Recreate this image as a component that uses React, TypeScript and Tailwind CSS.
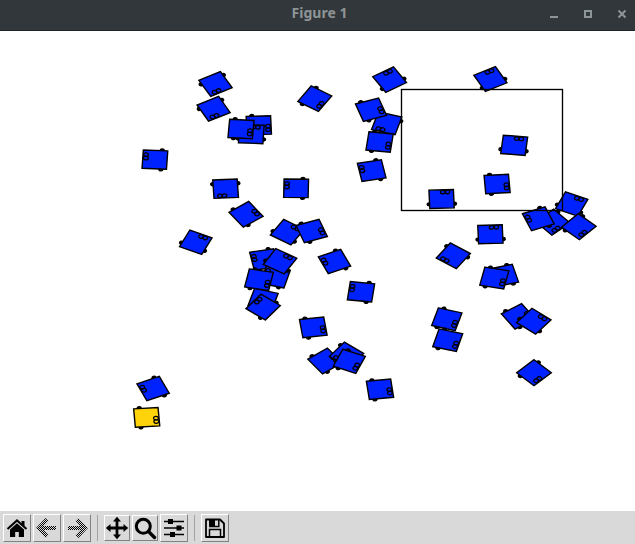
import type { ReactNode } from 'react';

type Robot = { x: number; y: number; angle: number; fill?: string };

const ASPECT = 1.33;

// Listed back to front: centre in pixels, heading in degrees (clockwise, 0 = right).
const robots: Robot[] = [
  { x: 215.5, y: 84, angle: 61 },
  { x: 213.6, y: 108.8, angle: 62 },
  { x: 258.8, y: 125.3, angle: -2 },
  { x: 251.3, y: 134, angle: -87 },
  { x: 241, y: 129, angle: 4 },
  { x: 154.9, y: 159.6, angle: 183 },
  { x: 314.8, y: 98.7, angle: 33 },
  { x: 389.6, y: 79.6, angle: -122 },
  { x: 386.7, y: 123.3, angle: 106 },
  { x: 371, y: 109.7, angle: -19 },
  { x: 379.6, y: 142, angle: 7 },
  { x: 371.7, y: 170.6, angle: 169 },
  { x: 225.6, y: 188.7, angle: 87 },
  { x: 296.1, y: 188.3, angle: 181 },
  { x: 246, y: 214.3, angle: -36 },
  { x: 195.8, y: 242.2, angle: -65 },
  { x: 287.3, y: 232.2, angle: -57 },
  { x: 311.7, y: 231, angle: -20 },
  { x: 264, y: 259.5, angle: 169 },
  { x: 275.3, y: 276.7, angle: 195 },
  { x: 280, y: 261.3, angle: -59 },
  { x: 263, y: 299.7, angle: 16 },
  { x: 259, y: 279.7, angle: 11 },
  { x: 263.1, y: 307.1, angle: 218 },
  { x: 334.5, y: 261.5, angle: 156 },
  { x: 361, y: 291.8, angle: 187 },
  { x: 313.3, y: 327.4, angle: -8 },
  { x: 325, y: 361, angle: -37 },
  { x: 346.5, y: 355, angle: 128 },
  { x: 349.3, y: 361.3, angle: 23 },
  { x: 380, y: 389.3, angle: -7 },
  { x: 153.1, y: 388.6, angle: 156 },
  { x: 490.4, y: 79, angle: -118 },
  { x: 514.2, y: 145.3, angle: -84 },
  { x: 497.1, y: 184, angle: -4 },
  { x: 441.6, y: 199, angle: -92 },
  { x: 490.4, y: 234.3, angle: -92 },
  { x: 453.3, y: 255.8, angle: 125 },
  { x: 503.6, y: 275.6, angle: 165 },
  { x: 494.3, y: 278, angle: 12 },
  { x: 552.8, y: 222.2, angle: 48 },
  { x: 571.7, y: 204, angle: -66 },
  { x: 578.8, y: 226.7, angle: 43 },
  { x: 538.3, y: 218.8, angle: 158 },
  { x: 446.8, y: 319.2, angle: 16 },
  { x: 447.7, y: 340.2, angle: 15 },
  { x: 518.3, y: 316.3, angle: -34 },
  { x: 533.8, y: 321.2, angle: -51 },
  { x: 534, y: 372.7, angle: 45 },
  { x: 146.7, y: 417.4, angle: -4, fill: '#ffd30a' },
];

function RobotShape({ x, y, angle, fill = '#0022ff' }: Robot) {
  return (
    <g transform={`translate(${x} ${y}) scale(${ASPECT} 1) rotate(${angle})`} stroke="#000" strokeWidth="1.4">
      <circle cx="-5" cy="-9.5" r="1.5" fill="#000" vectorEffect="non-scaling-stroke" />
      <circle cx="-5" cy="9.5" r="1.5" fill="#000" vectorEffect="non-scaling-stroke" />
      <rect x="-9.2" y="-9.2" width="18.4" height="18.4" fill={fill} vectorEffect="non-scaling-stroke" />
      <circle cx="6.9" cy="1.2" r="1.8" fill="none" strokeWidth="1.3" vectorEffect="non-scaling-stroke" />
      <circle cx="6.9" cy="4.6" r="1.8" fill="none" strokeWidth="1.3" vectorEffect="non-scaling-stroke" />
    </g>
  );
}

function ToolButton({ label, small, children }: { label: string; small?: boolean; children: ReactNode }) {
  return (
    <button
      aria-label={label}
      className={`flex shrink-0 items-center justify-center border border-t-white border-l-white border-r-[#828282] border-b-[#828282] bg-[#d9d9d9] ${small ? 'size-[26px]' : 'size-7'}`}
    >
      <svg width="24" height="24" viewBox="0 0 24 24" className="shrink-0">
        {children}
      </svg>
    </button>
  );
}

function Separator() {
  return <div className="h-[26px] w-px shrink-0 bg-[#a3a3a3]" />;
}

export default function App() {
  return (
    <div className="flex h-[544px] w-[635px] flex-col overflow-hidden bg-white">
      <header className="grid h-[31px] shrink-0 grid-cols-[1fr_auto_1fr] items-center border-b border-[#202426] bg-[#31373a] text-[#8e9596]">
        <span />
        <h1 className="pb-1 pl-1 font-['Noto_Sans',sans-serif] text-[14px] leading-5 font-bold">Figure 1</h1>
        <div className="flex justify-end">
          <svg width="90" height="24" viewBox="545 1 90 24" fill="none" stroke="currentColor" strokeWidth="2">
            <path d="M550 15h8" />
            <path d="M585 9h6v6h-6z" />
            <path d="m618.5 8.5 7 7m0-7-7 7" />
          </svg>
        </div>
      </header>

      <main className="h-[480px] shrink-0">
        <svg width="635" height="480" viewBox="0 31 635 480" className="block">
          {robots.map((r, i) => (
            <RobotShape key={i} {...r} />
          ))}
          <rect x="401.5" y="89.5" width="161" height="121" fill="none" stroke="#000" strokeWidth="1.35" />
        </svg>
      </main>

      <footer className="flex h-[33px] shrink-0 items-center bg-[#d9d9d9] pt-px pl-[3px]">
        <div className="flex gap-0.5">
          <ToolButton label="Home">
            <path d="M2.5 13 12 4.5l9.5 8.5" fill="none" stroke="#000" strokeWidth="2.1" />
            <path d="M16.5 5h3v6l-3-2.8zM5 13.4l7-6.2 7 6.2V21h-5.2v-5h-3.6v5H5z" />
          </ToolButton>
          <ToolButton label="Back">
            <defs>
              <pattern id="stipple" width="2" height="2" patternUnits="userSpaceOnUse">
                <rect width="1" height="1" />
                <rect x="1" y="1" width="1" height="1" />
              </pattern>
            </defs>
            <path d="M12 3.5 3.8 12l8.2 8.5M4.5 12H21" fill="none" stroke="url(#stipple)" strokeWidth="4" />
          </ToolButton>
          <ToolButton label="Forward">
            <path d="M12 3.5l8.2 8.5-8.2 8.5M19.5 12H3" fill="none" stroke="url(#stipple)" strokeWidth="4" />
          </ToolButton>
        </div>
        <div className="flex items-center pl-1.5">
          <Separator />
        </div>
        <div className="flex items-center gap-0.5 pl-1.5">
          <ToolButton label="Pan" small>
            <path d="M12 3v18M3 12h18" fill="none" stroke="#000" strokeWidth="2.8" />
            <path d="m12 .8 4 4.7H8zM12 23.2l4-4.7H8zM.8 12l4.7-4v8zM23.2 12l-4.7-4v8z" />
          </ToolButton>
          <ToolButton label="Zoom" small>
            <circle cx="10.3" cy="10.3" r="7" fill="none" stroke="#000" strokeWidth="3" />
            <path d="m15.5 15.5 6 6" fill="none" stroke="#000" strokeWidth="3.4" strokeLinecap="round" />
          </ToolButton>
          <ToolButton label="Configure subplots">
            <path d="M2 5.5h20M2 12h20M2 18.5h20" fill="none" stroke="#000" strokeWidth="1.7" />
            <path d="M6 3h5v5H6zM14.5 9.5h5v5h-5zM8 16h5v5H8z" />
          </ToolButton>
        </div>
        <div className="flex pr-1.5 pl-1.5">
          <Separator />
        </div>
        <ToolButton label="Save">
          <path d="M3 3.5h14L21 7.5V21H3z" fill="none" stroke="#000" strokeWidth="1.8" strokeLinejoin="round" />
          <path d="M6.5 21v-7.5h11V21M6.8 3.5v7h9v-7" fill="none" stroke="#000" strokeWidth="1.5" />
          <path d="M6.5 3.5H12V10H6.5z" />
        </ToolButton>
      </footer>
    </div>
  );
}
